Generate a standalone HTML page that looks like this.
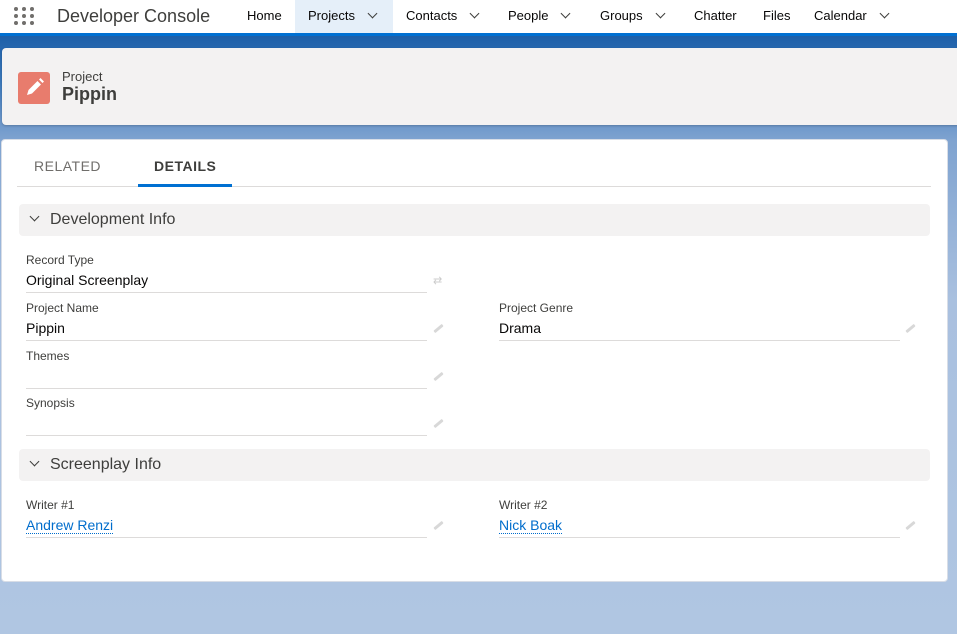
<!DOCTYPE html>
<html><head><style>
*{box-sizing:border-box;margin:0;padding:0}
body{width:957px;height:634px;overflow:hidden;font-family:"Liberation Sans",sans-serif;background:linear-gradient(#1d5fa8 35px,#3b78bb 80px,#7fa3d0 140px,#a9c0df 300px,#b0c6e2 634px);position:relative;color:#080707}
.nav{position:absolute;top:0;left:0;width:957px;background:#fff;border-bottom:3px solid #0070d2;height:36px}
.nav .t{position:absolute;top:8px;font-size:13px;color:#080707}
.dots{position:absolute;left:14px;top:7px;width:22px;height:18px}
.dots i{position:absolute;width:4px;height:4px;border-radius:2px;background:#706e6b}
.chev{display:inline-block;width:7px;height:7px;border-right:1.6px solid #3e3e3c;border-bottom:1.6px solid #3e3e3c;transform:rotate(45deg);margin-left:14px;position:relative;top:-3px}
.hdr{position:absolute;left:2px;top:48px;width:960px;height:77px;background:#f3f2f2;border-radius:4px;box-shadow:0 1px 2px rgba(0,0,0,.2)}
.card{position:absolute;left:1px;top:139px;width:947px;height:443px;background:#fff;border-radius:4px;border:1px solid #d8dde6}
.sec{position:absolute;left:17px;width:911px;height:32px;background:#f3f2f2;border-radius:4px;font-size:16px;color:#3e3e3c}
.sec span{position:absolute;left:31px;top:7px}
.sec b{position:absolute;left:12px;top:9px;width:7px;height:7px;border-right:1.7px solid #3e3e3c;border-bottom:1.7px solid #3e3e3c;transform:rotate(45deg)}
.f{position:absolute;width:401px;height:40px;border-bottom:1px solid #dddbda}
.f .l{position:absolute;top:0;font-size:12px;color:#3e3e3c}
.f .v{position:absolute;top:19px;font-size:14px;color:#080707}
.pen{position:absolute;width:11px;height:3px;background:#d8d8d8;transform:rotate(-40deg);border-radius:1px}
a{color:#006dcc;text-decoration:none;border-bottom:1px dotted #006dcc}
</style></head><body>
<div class="nav">
<div class="dots"><i style="left:0;top:0"></i><i style="left:8px;top:0"></i><i style="left:16px;top:0"></i><i style="left:0;top:7px"></i><i style="left:8px;top:7px"></i><i style="left:16px;top:7px"></i><i style="left:0;top:14px"></i><i style="left:8px;top:14px"></i><i style="left:16px;top:14px"></i></div>
<div class="t" style="left:57px;top:6px;font-size:18px;color:#3e3e3c;font-weight:300">Developer Console</div>
<div class="t" style="left:247px">Home</div>
<div style="position:absolute;left:295px;top:0;width:98px;height:33px;background:#e5eff9"></div>
<div class="t" style="left:308px">Projects<span class="chev"></span></div>
<div class="t" style="left:406px">Contacts<span class="chev"></span></div>
<div class="t" style="left:508px">People<span class="chev"></span></div>
<div class="t" style="left:600px">Groups<span class="chev"></span></div>
<div class="t" style="left:694px">Chatter</div>
<div class="t" style="left:763px">Files</div>
<div class="t" style="left:814px">Calendar<span class="chev"></span></div>
</div>
<div class="hdr">
<div style="position:absolute;left:16px;top:24px;width:32px;height:32px;background:#e87c6d;border-radius:3px">
<svg width="32" height="32" viewBox="0 0 32 32"><path d="M9 23l1.5-5 9-9 3.5 3.5-9 9z M21 7.5l1.5-1.5 3.5 3.5-1.5 1.5z" fill="#fff"/></svg></div>
<div style="position:absolute;left:60px;top:21px;font-size:13px;color:#3e3e3c">Project</div>
<div style="position:absolute;left:60px;top:36px;font-size:18px;font-weight:bold;color:#3e3e3c">Pippin</div>
</div>
<div class="card">
<div style="position:absolute;left:32px;top:18px;font-size:14px;color:#706e6b;letter-spacing:.5px">RELATED</div>
<div style="position:absolute;left:152px;top:18px;font-size:14px;color:#3e3e3c;font-weight:bold;letter-spacing:.5px">DETAILS</div>
<div style="position:absolute;left:15px;top:46px;width:914px;height:1px;background:#dddbda"></div>
<div style="position:absolute;left:136px;top:44px;width:94px;height:3px;background:#0070d2"></div>
<div class="sec" style="top:64px"><b></b><span>Development Info</span></div>
<div class="f" style="left:24px;top:113px"><div class="l">Record Type</div><div class="v">Original Screenplay</div></div>
<div style="position:absolute;left:431px;top:134px;font-size:11px;color:#ccc">⇄</div>
<div class="f" style="left:24px;top:161px"><div class="l">Project Name</div><div class="v">Pippin</div></div>
<div class="pen" style="left:431px;top:187px"></div>
<div class="f" style="left:497px;top:161px"><div class="l">Project Genre</div><div class="v">Drama</div></div>
<div class="pen" style="left:903px;top:187px"></div>
<div class="f" style="left:24px;top:209px"><div class="l">Themes</div></div>
<div class="pen" style="left:431px;top:235px"></div>
<div class="f" style="left:24px;top:256px"><div class="l">Synopsis</div></div>
<div class="pen" style="left:431px;top:282px"></div>
<div class="sec" style="top:309px"><b></b><span>Screenplay Info</span></div>
<div class="f" style="left:24px;top:358px"><div class="l">Writer #1</div><div class="v"><a>Andrew Renzi</a></div></div>
<div class="pen" style="left:431px;top:384px"></div>
<div class="f" style="left:497px;top:358px"><div class="l">Writer #2</div><div class="v"><a>Nick Boak</a></div></div>
<div class="pen" style="left:903px;top:384px"></div>
</div>
</body></html>
